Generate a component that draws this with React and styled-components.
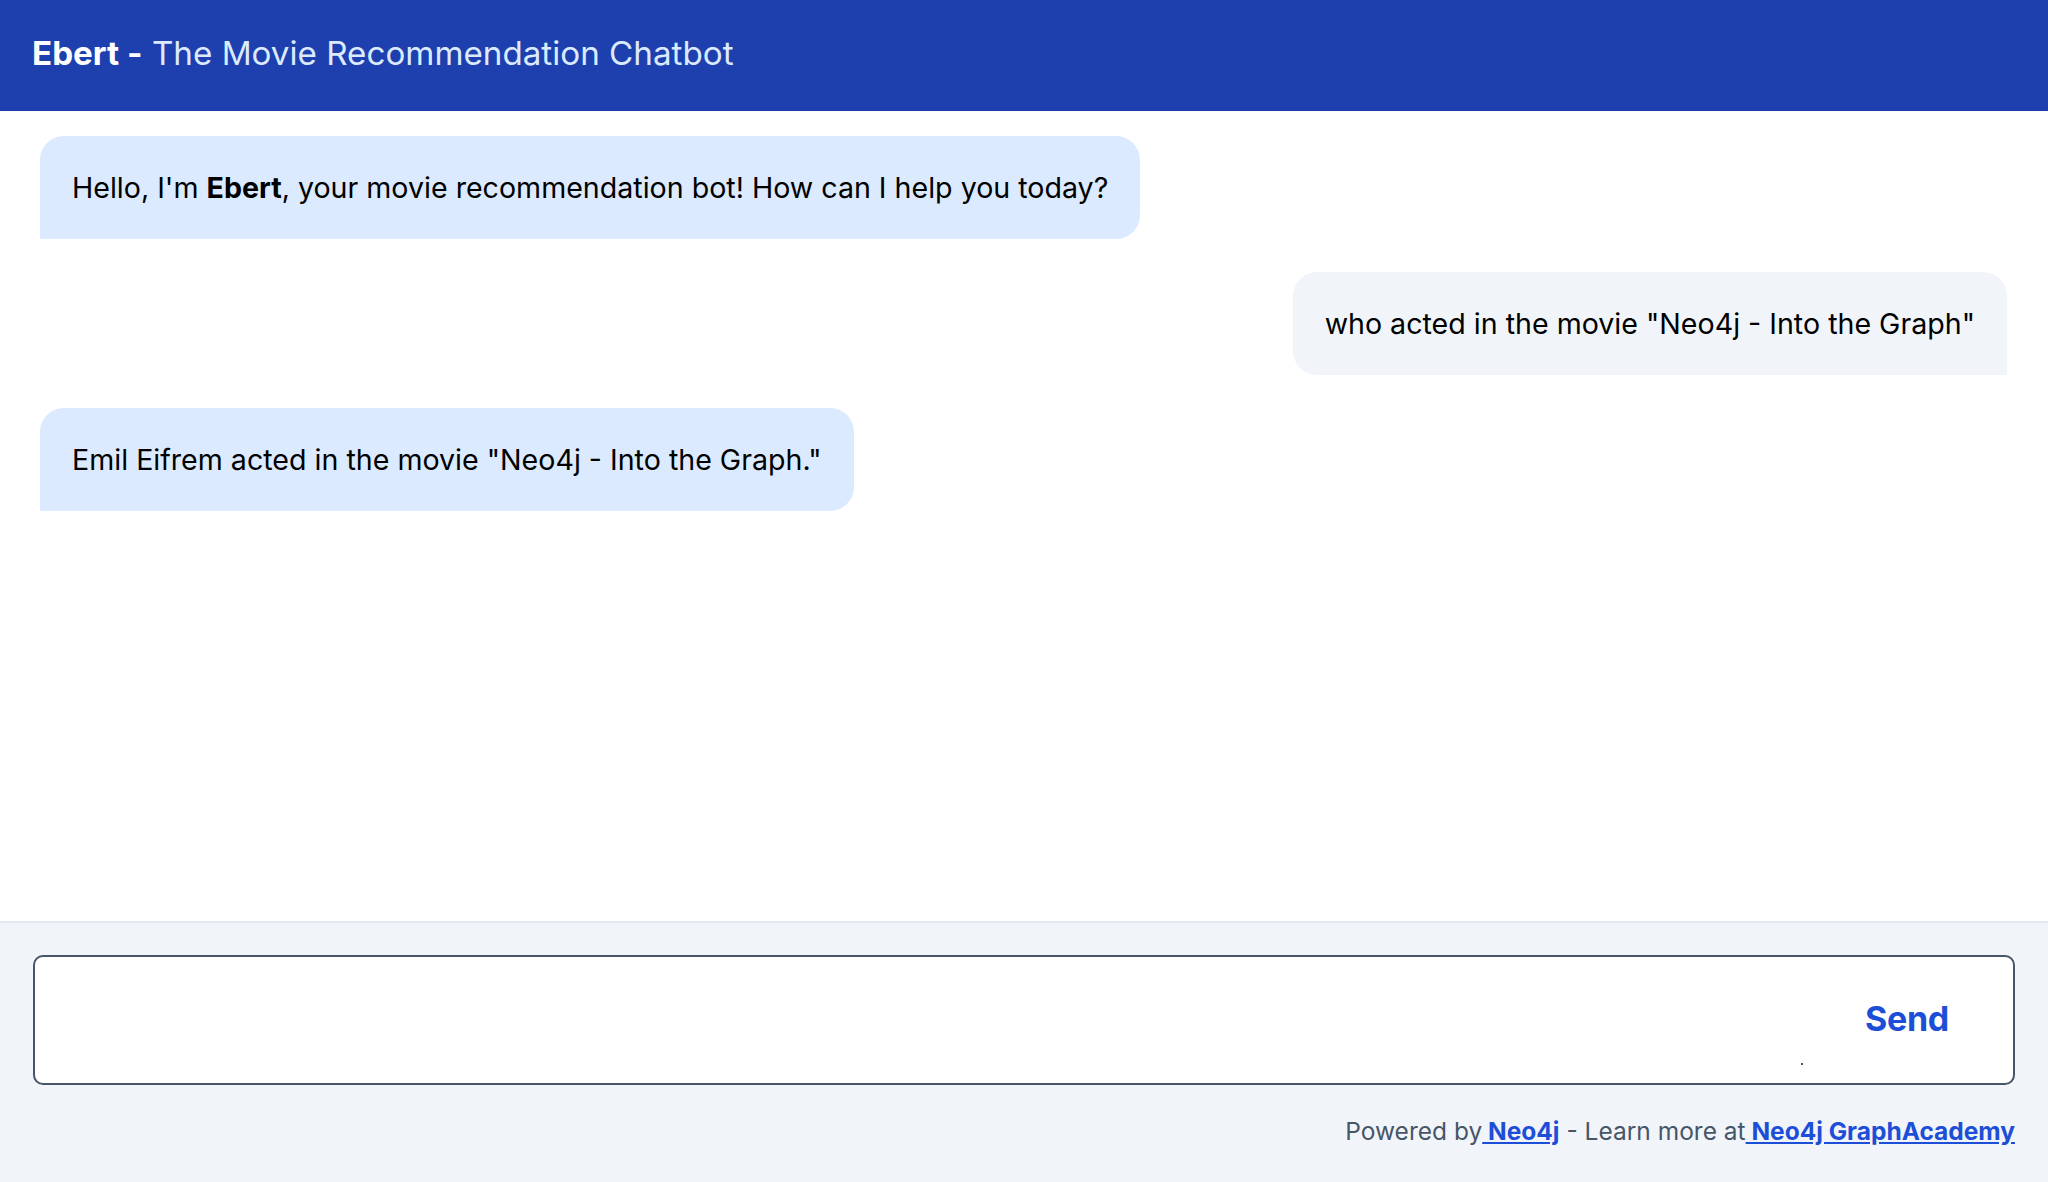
import React, { useState } from "react";
import styled, { createGlobalStyle } from "styled-components";

const GlobalStyle = createGlobalStyle`
  html, body {
    margin: 0;
    padding: 0;
    height: 100%;
  }
  body {
    font-family: Inter, "Noto Sans", sans-serif;
    color: #000;
    background: #fff;
  }
  #root {
    height: 100%;
  }
`;

const Page = styled.div`
  display: flex;
  flex-direction: column;
  height: 1182px;
`;

const Header = styled.header`
  height: 111px;
  flex-shrink: 0;
  background-color: #1e40af;
  display: flex;
  align-items: center;
  padding: 0 32px;
  box-sizing: border-box;
`;

const Title = styled.h1`
  margin: 0;
  font-size: 33.2px;
  font-weight: 400;
  color: #dbeafe;
  padding-bottom: 6px;

  strong {
    color: #fff;
    font-weight: 700;
  }
`;

const Messages = styled.main`
  flex: 1;
  display: flex;
  flex-direction: column;
  gap: 33px;
  padding: 25px 41px 0 40px;
  overflow-y: auto;
`;

const Bubble = styled.div`
  align-self: ${(p) => (p.$fromUser ? "flex-end" : "flex-start")};
  background-color: ${(p) => (p.$fromUser ? "#f1f5f9" : "#dbeafe")};
  border-radius: ${(p) => (p.$fromUser ? "24px 24px 0 24px" : "24px 24px 24px 0")};
  padding: 30px 32px;
  font-size: 28.6px;
  line-height: 43px;
  max-width: 80%;

  strong {
    font-weight: 700;
  }
`;

const Footer = styled.footer`
  flex-shrink: 0;
  background-color: #f1f5f9;
  border-top: 2px solid #e2e8f0;
  padding: 32px 33px 36px 33px;
  display: flex;
  flex-direction: column;
  gap: 31px;
`;

const InputBox = styled.form`
  height: 130px;
  box-sizing: border-box;
  background: #fff;
  border: 2px solid #475569;
  border-radius: 10px;
  display: flex;
  align-items: center;
  padding: 0 64px 0 24px;
  position: relative;
`;

const TextInput = styled.input`
  flex: 1;
  border: none;
  outline: none;
  background: transparent;
  font-family: inherit;
  font-size: 28px;
`;

const SendButton = styled.button`
  border: none;
  background: none;
  cursor: pointer;
  font-family: inherit;
  font-size: 34px;
  font-weight: 700;
  color: #1d4ed8;
  padding: 0;
  margin-bottom: 4px;
  letter-spacing: -0.3px;
`;

const Dot = styled.span`
  position: absolute;
  left: 1766px;
  top: 106px;
  width: 2px;
  height: 2px;
  background: #475569;
`;

const Credits = styled.p`
  margin: 0;
  text-align: right;
  font-size: 24.5px;
  line-height: 30px;
  color: #475569;

  a {
    color: #1d4ed8;
    font-weight: 700;
    text-decoration: underline;
  }
`;

const messages = [
  {
    role: "assistant",
    content: (
      <>
        Hello, I'm <strong>Ebert</strong>, your movie recommendation bot! How can I help you today?
      </>
    ),
  },
  { role: "user", content: 'who acted in the movie "Neo4j - Into the Graph"' },
  { role: "assistant", content: 'Emil Eifrem acted in the movie "Neo4j - Into the Graph."' },
];

export default function App() {
  const [input, setInput] = useState("");

  return (
    <>
      <GlobalStyle />
      <Page>
        <Header>
          <Title>
            <strong>Ebert -</strong> The Movie Recommendation Chatbot
          </Title>
        </Header>
        <Messages>
          {messages.map((m, i) => (
            <Bubble key={i} $fromUser={m.role === "user"}>
              {m.content}
            </Bubble>
          ))}
        </Messages>
        <Footer>
          <InputBox onSubmit={(e) => e.preventDefault()}>
            <TextInput value={input} onChange={(e) => setInput(e.target.value)} />
            <SendButton type="submit">Send</SendButton>
            <Dot />
          </InputBox>
          <Credits>
            Powered by<a href="#"> Neo4j</a> - Learn more at<a href="#"> Neo4j GraphAcademy</a>
          </Credits>
        </Footer>
      </Page>
    </>
  );
}
